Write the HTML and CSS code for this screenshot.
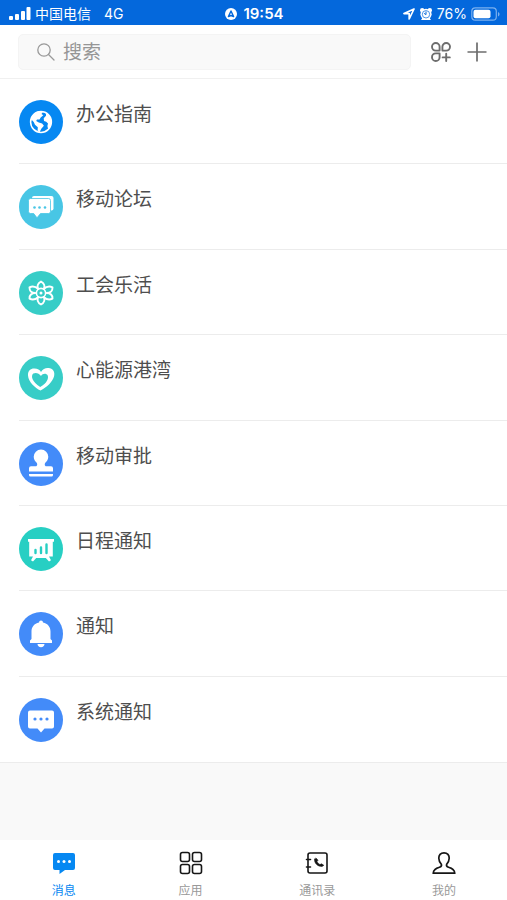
FILE: index.html
```html
<!DOCTYPE html>
<html lang="zh-CN">
<head>
<meta charset="utf-8">
<meta name="viewport" content="width=device-width, initial-scale=1">
<title>消息</title>
<link rel="stylesheet" href="styles.css">
</head>
<body>
<div class="status">
  <div class="status-left">
    <svg width="22" height="14" viewBox="0 0 22 14" fill="#fff" aria-hidden="true"><rect x="0" y="9" width="4" height="4" rx="1"/><rect x="6" y="7" width="4" height="6" rx="1"/><rect x="12" y="4" width="4" height="9" rx="1"/><rect x="17.500" y="0" width="4" height="13" rx="1"/></svg>
    <span class="carrier">中国电信</span>
    <span>4G</span>
  </div>
  <div class="status-time">
    <svg width="12" height="12" viewBox="0 0 12 12" aria-hidden="true"><circle cx="6" cy="6" r="6" fill="#fff"/><path d="M3.400 8.600 6 3l2.600 5.600L6 7.500z" fill="none" stroke="#0468dc" stroke-width="1.400" stroke-linejoin="round"/></svg>
    <span>19:54</span>
  </div>
  <div class="status-right">
    <svg width="12" height="12" viewBox="0 0 12 12" aria-hidden="true"><path d="M11 1 1 5.600h5.200V11z" fill="none" stroke="#fff" stroke-width="1.700" stroke-linejoin="round"/></svg>
    <svg width="14" height="14" viewBox="0 0 14 14" aria-hidden="true"><g fill="#fff"><circle cx="3.200" cy="3.200" r="2.200"/><circle cx="10.800" cy="3.200" r="2.200"/><circle cx="7" cy="7.300" r="5.600"/><path d="m2 13 2-3h6l2 3z"/></g><circle cx="7" cy="7.300" r="3.700" fill="none" stroke="#0468dc" stroke-width=".7"/><path d="M7 5v2.600L5.400 6.600" fill="none" stroke="#0468dc" stroke-width="1" stroke-linecap="round"/></svg>
    <span>76%</span>
    <svg width="29" height="14" viewBox="0 0 29 14" aria-hidden="true"><rect x=".8" y=".8" width="24.500" height="12.400" rx="3.500" fill="none" stroke="#7bb0ee" stroke-width="1.200"/><rect x="2.500" y="2.700" width="17" height="8.600" rx="2" fill="#fff"/><path d="M27 5v4.500c2-.8 2-3.700 0-4.500z" fill="#7bb0ee"/></svg>
  </div>
</div>

<header class="topbar">
  <label class="search">
    <svg width="18" height="18" viewBox="0 0 18 18" fill="none" stroke="#999" stroke-width="1.300" stroke-linecap="round" aria-hidden="true"><circle cx="7" cy="7" r="6.200"/><path d="m11.500 11.500 5.500 5.500"/></svg>
    <input type="search" placeholder="搜索" aria-label="搜索">
  </label>
  <button class="tool" type="button" aria-label="添加应用">
    <svg width="20" height="20" viewBox="0 0 20 20" fill="none" stroke="#6d6d6d" stroke-width="1.900" stroke-linecap="round" stroke-linejoin="round" aria-hidden="true"><path d="M4.800 1A3.800 3.800 0 1 0 4.800 8.600H8.600V4.800A3.800 3.800 0 0 0 4.800 1zM15.200 1A3.800 3.800 0 0 0 11.400 4.800V8.600H15.200A3.800 3.800 0 0 0 15.200 1zM4.800 11.400H8.600V15.200A3.800 3.800 0 1 1 4.800 11.400zM15.200 11.800v7.200M11.600 15.400h7.200"/></svg>
  </button>
  <button class="tool" type="button" aria-label="新建">
    <svg width="20" height="20" viewBox="0 0 20 20" fill="none" stroke="#6d6d6d" stroke-width="1.700" aria-hidden="true"><path d="M10 .5v19M.5 10h19"/></svg>
  </button>
</header>

<main class="content">
  <ul class="list">
    <li><a class="row" href="#guide">
      <svg class="avatar" viewBox="0 0 44 44" aria-hidden="true"><circle cx="22" cy="22" r="22" fill="#0688f2"/><circle cx="22" cy="22" r="10.400" fill="none" stroke="#fff" stroke-width="1.500"/><path fill="#fff" d="M12 19c1-4 4-7 8-7.700l4 .4-1.500 2.300 1.800 1.200-2.600 2.400-1.200 2-2.500-.2-.8 1.600 2.600 1.600 3.300.8 1.800 2.300-2.600 3-1.700 3.500-2-1.300.2-3.700-2.800-2.400-1.300-2.800zM27 12.500c3.500 2 5.500 5.500 5.400 9.500-.1 3-1.400 5.700-3.200 7.500l-.8-3.500.6-2.600-1.800-1.600-2.200-.8-.3-2.800 2.300-2.500z"/></svg>
      <span class="name">办公指南</span></a></li>
    <li><a class="row" href="#forum">
      <svg class="avatar" viewBox="0 0 44 44" aria-hidden="true"><circle cx="22" cy="22" r="22" fill="#48c6e5"/><rect x="13" y="11" width="21.500" height="14.500" rx="2" fill="#fff"/><path d="M11.500 13.500h18a2 2 0 0 1 2 2v11a2 2 0 0 1-2 2h-8L18 32.800l-3.300-4.300h-3.200a2 2 0 0 1-2-2v-11a2 2 0 0 1 2-2z" fill="#fff" stroke="#48c6e5" stroke-width=".8"/><g fill="#48c6e5"><circle cx="15.500" cy="22.500" r="1.300"/><circle cx="20.500" cy="22.500" r="1.300"/><circle cx="26" cy="22.500" r="1.300"/></g></svg>
      <span class="name">移动论坛</span></a></li>
    <li><a class="row" href="#union">
      <svg class="avatar" viewBox="0 0 44 44" aria-hidden="true"><circle cx="22" cy="22" r="22" fill="#37cdc7"/><g fill="none" stroke="#fff" stroke-width="1.900" stroke-linejoin="round"><path d="M22 10.500C18.500 12.500 17.800 15.500 19.300 18 16.500 15.400 13 15 10.500 16.400 10.500 20 13 22 16.300 22 13 22 10.500 24 10.500 27.600 13 29 16.500 28.600 19.300 26 17.800 28.500 18.500 31.500 22 33.500 25.500 31.500 26.200 28.500 24.700 26 27.500 28.600 31 29 33.500 27.600 33.500 24 31 22 27.700 22 31 22 33.500 20 33.500 16.400 31 15 27.500 15.400 24.700 18 26.200 15.500 25.500 12.500 22 10.500z"/><circle cx="22" cy="22" r="4.600" stroke-width="1.600"/></g><circle cx="22" cy="22" r="1.500" fill="#fff"/></svg>
      <span class="name">工会乐活</span></a></li>
    <li><a class="row" href="#harbor">
      <svg class="avatar" viewBox="0 0 44 44" aria-hidden="true"><circle cx="22" cy="22" r="22" fill="#37cdc7"/><path fill="#fff" fill-rule="evenodd" d="M22 16C24 12 28 11.500 31 12.300 35 13.500 36 17 35 20.500 33.500 26 27.500 31.500 21.500 34.500 16 32 9.500 26 9 19.500 8.600 15 12 12.300 15.500 12.600 18.500 12.800 21 14 22 16zM22 20C20 17.500 17 16 14.300 17.600 11.500 20 13 26 21.200 31 28 27.500 30 22 28.600 19.300 27 16.800 23.500 17.500 22 20z"/></svg>
      <span class="name">心能源港湾</span></a></li>
    <li><a class="row" href="#approval">
      <svg class="avatar" viewBox="0 0 44 44" aria-hidden="true"><circle cx="22" cy="22" r="22" fill="#438bf9"/><path fill="#fff" d="M22 7.500a7.300 7.300 0 0 1 7.300 7.300c0 3-1.800 4.700-3 5.900-.8 1-.8 3.500 1 3.500H32a2 2 0 0 1 2 2V29.500H10V26.200a2 2 0 0 1 2-2h4.700c1.800 0 1.800-2.500 1-3.500-1.200-1.200-3-2.900-3-5.900A7.300 7.300 0 0 1 22 7.500zM10 32h24v1a1.500 1.500 0 0 1-1.500 1.500h-21A1.500 1.500 0 0 1 10 33z"/></svg>
      <span class="name">移动审批</span></a></li>
    <li><a class="row" href="#schedule">
      <svg class="avatar" viewBox="0 0 44 44" aria-hidden="true"><circle cx="22" cy="22" r="22" fill="#27cfc3"/><path fill="#fff" d="M9 12h26v2.800h-1.200V29.500H30l2 3.700-2 1.200-3.200-3.400h-9.600L14 34.400l-2-1.200 2-3.700h-3.800V14.800H9z"/><path d="M16.500 23v3M22 20.500v5.500M27.500 17.500V26" stroke="#27cfc3" stroke-width="2.400" stroke-linecap="round"/></svg>
      <span class="name">日程通知</span></a></li>
    <li><a class="row" href="#notice">
      <svg class="avatar" viewBox="0 0 44 44" aria-hidden="true"><circle cx="22" cy="22" r="22" fill="#438bf9"/><path fill="#fff" d="M22 8.500a2 2 0 0 1 2 2c4.800 1 7.500 4.500 7.500 9V27l1.500 1.500V31H11v-2.500l1.500-1.500v-7.500c0-4.500 2.700-8 7.500-9a2 2 0 0 1 2-2zM18.500 32h7c0 2-1.500 3.200-3.500 3.200s-3.500-1.200-3.500-3.200z"/></svg>
      <span class="name">通知</span></a></li>
    <li><a class="row" href="#system">
      <svg class="avatar" viewBox="0 0 44 44" aria-hidden="true"><circle cx="22" cy="22" r="22" fill="#438bf9"/><path fill="#fff" d="M11 12.500h22a2 2 0 0 1 2 2v14a2 2 0 0 1-2 2h-7.500L22 34.500l-3.500-4H11a2 2 0 0 1-2-2v-14a2 2 0 0 1 2-2z"/><g fill="#438bf9"><circle cx="16" cy="21" r="1.600"/><circle cx="22" cy="21" r="1.600"/><circle cx="28" cy="21" r="1.600"/></g></svg>
      <span class="name">系统通知</span></a></li>
  </ul>
</main>

<nav class="tabs">
  <a class="tab active" href="#messages">
    <svg width="24" height="24" viewBox="0 0 24 24" aria-hidden="true"><path fill="#0688f2" d="M3 2h18a2 2 0 0 1 2 2v13a2 2 0 0 1-2 2h-8l-5.500 4v-4H3a2 2 0 0 1-2-2V4a2 2 0 0 1 2-2z"/><g fill="#fff"><circle cx="6.500" cy="10.500" r="1.500"/><circle cx="12" cy="10.500" r="1.500"/><circle cx="17.500" cy="10.500" r="1.500"/></g></svg>
    <span>消息</span></a>
  <a class="tab" href="#apps">
    <svg width="24" height="24" viewBox="0 0 24 24" fill="none" stroke="#161616" stroke-width="1.600" aria-hidden="true"><rect x="1.500" y="1.500" width="9" height="9" rx="2"/><rect x="13.500" y="1.500" width="9" height="9" rx="2"/><rect x="1.500" y="13.500" width="9" height="9" rx="2"/><rect x="13.500" y="13.500" width="9" height="9" rx="2"/></svg>
    <span>应用</span></a>
  <a class="tab" href="#contacts">
    <svg width="24" height="24" viewBox="0 0 24 24" fill="none" stroke="#161616" stroke-width="1.600" stroke-linecap="round" aria-hidden="true"><rect x="3" y="2" width="19" height="20" rx="2"/><path d="M1.500 8.500h4M1.500 16h4"/><path d="M9.500 8.200c-.2 4 2.800 7.200 7.500 7.300l1.800-1.200-2.300-1.500-1.500.8c-1.400-.6-2.400-1.600-3-3l1-1.400L11.200 7.300z" fill="#161616" stroke-width=".6"/></svg>
    <span>通讯录</span></a>
  <a class="tab" href="#me">
    <svg width="24" height="24" viewBox="0 0 24 24" fill="none" stroke="#161616" stroke-width="1.700" stroke-linejoin="round" aria-hidden="true"><path d="M12 1.800c-3.500 0-5.300 2.500-5.200 5.400.1 2.500 1 4.600 2.600 6.200.5 1.500-.4 2.300-2 2.900-3.500 1.200-6 2.200-6.200 5.900h21.600c-.2-3.700-2.700-4.700-6.200-5.900-1.600-.6-2.500-1.400-2-2.900 1.600-1.600 2.500-3.700 2.600-6.200.1-2.900-1.700-5.400-5.200-5.400z"/></svg>
    <span>我的</span></a>
</nav>
</body>
</html>
```

FILE: styles.css
```css
* { box-sizing: border-box; }

body {
  margin: 0;
  min-height: 100vh;
  display: flex;
  flex-direction: column;
  background: #f9f9f9;
  color: #4e4e4e;
  font-family: Inter, "Noto Sans CJK SC", sans-serif;
}

a { color: inherit; text-decoration: none; }
svg { display: block; flex: none; }

.status {
  display: grid;
  grid-template-columns: 1fr auto 1fr;
  align-items: center;
  height: 25px;
  padding: 2px 7px 0 9px;
  background: #0468dc;
  color: #fff;
  font-size: 14px;
  line-height: 20px;
}

.status-left,
.status-time,
.status-right { display: flex; align-items: center; gap: 4px; }
.status-right { justify-content: flex-end; }
.status-time { gap: 6px; font-size: 15px; font-weight: 600; }
.carrier { margin-right: 9px; }

.topbar {
  display: flex;
  align-items: center;
  gap: 16px;
  padding: 9px 20px 8px 18px;
  background: #fff;
  border-bottom: 1px solid #f0f0f0;
}

.search {
  flex: 1;
  min-width: 0;
  display: flex;
  align-items: center;
  gap: 8px;
  height: 36px;
  margin-right: 4px;
  padding: 0 18px;
  background: #f9f9f9;
  border: 1px solid #f4f4f4;
  border-radius: 5px;
}

.search input {
  flex: 1;
  min-width: 0;
  padding: 2px 0 0;
  border: 0;
  outline: 0;
  background: transparent;
  color: #4e4e4e;
  font: inherit;
  font-size: 19px;
  line-height: 28px;
}

.search input::placeholder { color: #969696; opacity: 1; }

.tool { padding: 0; border: 0; background: none; cursor: pointer; }

.content { flex: 1; }

.list {
  display: grid;
  grid-template-rows: repeat(8, 1fr);
  min-height: 76vh;
  margin: 0;
  padding: 0 0 0 19px;
  list-style: none;
  background: #fff;
  border-bottom: 1px solid #ececec;
}

.list li { border-bottom: 1px solid #ececec; }
.list li:last-child { border-bottom: 0; }

.row {
  display: flex;
  align-items: flex-start;
  gap: 13px;
  padding: 21px 19px 0 0;
}

.avatar { width: 44px; height: 44px; }
.name { font-size: 19px; line-height: 30px; }

.tabs {
  display: grid;
  grid-template-columns: repeat(4, 1fr);
  height: 60px;
  background: #fff;
}

.tab {
  display: flex;
  flex-direction: column;
  align-items: center;
  gap: 8px;
  padding: 11px 0 0 1px;
  color: #999;
  font-size: 12px;
  line-height: 16px;
}

.tab.active { color: #0688f2; }
```
